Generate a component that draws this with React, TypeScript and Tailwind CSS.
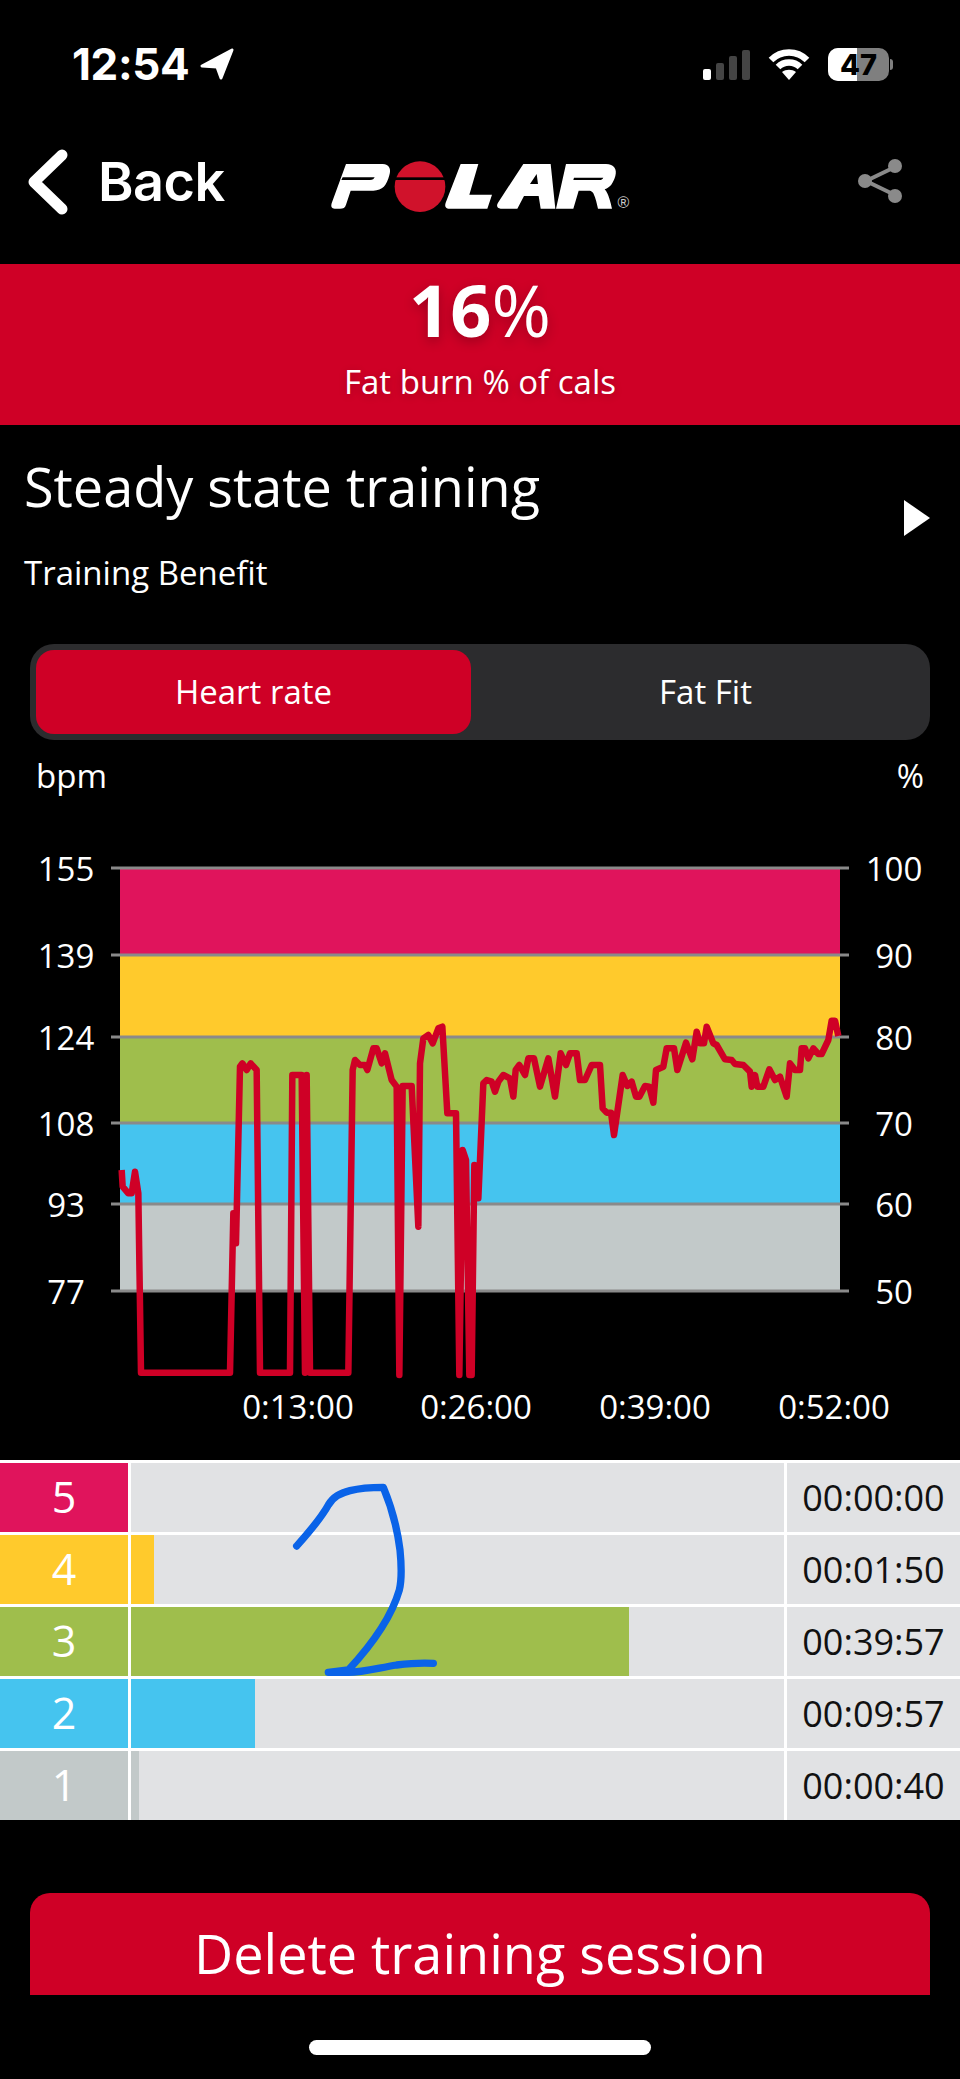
import React from 'react';

const OPEN_SANS = "font-['Open_Sans',sans-serif]";

const bands = [
  { y: 868, h: 87, color: '#e0145c' },
  { y: 955, h: 82, color: '#ffca2c' },
  { y: 1037, h: 86, color: '#9fbe4c' },
  { y: 1123, h: 81, color: '#45c4ef' },
  { y: 1204, h: 87, color: '#c2c9c9' },
];

const ticks = [
  { y: 868, bpm: '155', pct: '100' },
  { y: 955, bpm: '139', pct: '90' },
  { y: 1037, bpm: '124', pct: '80' },
  { y: 1123, bpm: '108', pct: '70' },
  { y: 1204, bpm: '93', pct: '60' },
  { y: 1291, bpm: '77', pct: '50' },
];

const times = [
  { x: 298, label: '0:13:00' },
  { x: 476, label: '0:26:00' },
  { x: 655, label: '0:39:00' },
  { x: 834, label: '0:52:00' },
];

const zones = [
  { n: 5, color: '#e0145c', bar: 0, time: '00:00:00' },
  { n: 4, color: '#ffca2c', bar: 23, time: '00:01:50' },
  { n: 3, color: '#9fbe4c', bar: 498, time: '00:39:57' },
  { n: 2, color: '#45c4ef', bar: 124, time: '00:09:57' },
  { n: 1, color: '#c2c9c9', bar: 8, time: '00:00:40' },
];

// heart rate trace, first part
const traceA = [
  [185, 570], [188, 620], [205, 640], [215, 640], [225, 575], [235, 640], [243, 1178], [510, 1178], [520, 700], [528, 790],
  [540, 260], [547, 250], [560, 270], [572, 250], [590, 270], [600, 1178], [690, 1178], [697, 285], [725, 285], [735, 1178],
  [740, 285], [750, 1178], [865, 1178], [878, 270], [885, 240], [900, 255], [915, 255], [922, 270], [940, 205], [950, 205],
  [965, 250], [975, 220], [995, 300], [1010, 320], [1018, 1185], [1028, 318], [1055, 318], [1075, 740], [1080, 250], [1090, 175],
  [1105, 165], [1118, 190], [1135, 145], [1147, 140], [1162, 400], [1188, 400], [1198, 1185], [1208, 510], [1218, 540], [1228, 1185],
  [1235, 1185], [1243, 555], [1255, 655], [1270, 310], [1280, 300], [1295, 305], [1305, 335], [1315, 305], [1330, 285], [1350, 295],
].map(([x, y]) => `${60 + x / 3},${980 + y / 3}`);

// second part
const traceB = [
  [190, 350], [197, 270], [208, 255], [225, 285], [235, 235], [252, 235], [270, 320], [295, 235], [315, 350], [332, 220],
  [348, 255], [360, 220], [380, 220], [390, 300], [405, 300], [425, 255], [450, 255], [458, 385], [470, 398], [483, 398],
  [492, 465], [518, 285], [532, 318], [545, 305], [558, 350], [568, 350], [585, 318], [598, 320], [610, 368], [618, 270],
  [640, 260], [650, 205], [672, 205], [682, 270], [708, 188], [727, 238], [740, 155], [750, 190], [762, 190], [770, 140],
  [790, 190], [800, 195], [825, 238], [845, 240], [855, 252], [880, 255], [900, 275], [905, 320], [915, 285], [922, 320],
  [940, 320], [958, 268], [975, 300], [990, 290], [1010, 350], [1020, 250], [1035, 270], [1050, 270], [1055, 205], [1065, 205],
  [1075, 235], [1090, 205], [1105, 222], [1115, 222], [1135, 180], [1145, 122], [1155, 122], [1165, 168],
].map(([x, y]) => `${450 + x / 3},${980 + y / 3}`);

const StatusBar = () => (
  <div className="flex h-[100px] items-start justify-between pl-[72px] pr-[67px] pt-[43px]">
    <div className="flex items-center gap-[10px]">
      <span className="font-['Inter',sans-serif] text-[44px] leading-[42px] font-bold tracking-[-0.4px] text-white">12:54</span>
      <svg width="36" height="34" viewBox="0 0 36 34">
        <path d="M33 3 L3 19 L18 20 L22 31 Z" fill="#fff" stroke="#fff" strokeWidth="3" strokeLinejoin="round" />
      </svg>
    </div>
    <div className="mt-[5px] flex items-center">
      <div className="flex h-[31px] items-end gap-[5px]">
        <div className="h-[11px] w-[8px] rounded-[2px] bg-white" />
        <div className="h-[17px] w-[8px] rounded-[2px] bg-[#444]" />
        <div className="h-[24px] w-[8px] rounded-[2px] bg-[#444]" />
        <div className="h-[30px] w-[8px] rounded-[2px] bg-[#444]" />
      </div>
      <svg className="ml-[18px]" width="42" height="32" viewBox="0 0 42 32" fill="none" stroke="#fff" strokeWidth="6.5">
        <path d="M3 11 C13 1 29 1 39 11" />
        <path d="M10 18 C16 12 26 12 32 18" />
        <path d="M21 31 L14 23 C18 20 24 20 28 23 Z" fill="#fff" stroke="none" />
      </svg>
      <div className="relative ml-[18px] flex h-[33px] w-[61px] items-center justify-center overflow-hidden rounded-[10px] bg-[#7f7f7f]">
        <div className="absolute inset-y-0 left-0 w-[29px] bg-white" />
        <span className="relative font-['Inter',sans-serif] text-[29px] leading-none font-extrabold text-black">47</span>
      </div>
      <div className="ml-[1px] h-[11px] w-[3px] rounded-r-full bg-[#7f7f7f]" />
    </div>
  </div>
);

const PolarLogo = () => (
  <svg width="340" height="90" viewBox="0 0 1020 270" className="absolute left-[310px] top-[40px]">
    <path
      fillRule="evenodd"
      fill="#fff"
      d="M108 72 H218 C238 72 244 88 238 106 C230 136 218 152 190 152 H122 L108 194 C105 203 100 206 90 206 H74 C65 206 62 200 65 190 Z M98 112 L94 120 H180 C188 120 192 117 194 112 Z"
    />
    <circle cx="330" cy="140" r="76" fill="#d0122b" />
    <rect x="250" y="112" width="160" height="8" fill="#000" />
    <path fill="#fff" d="M452 72 H505 L478 164 H546 L532 206 H420 C408 206 403 200 407 188 Z" />
    <path
      fillRule="evenodd"
      fill="#fff"
      d="M640 72 H722 L736 206 H692 L686 168 H642 L622 206 H572 C562 206 558 198 564 188 Z M660 132 H684 L680 102 Z"
    />
    <path
      fillRule="evenodd"
      fill="#fff"
      d="M768 72 H888 C912 72 922 88 916 108 C910 128 902 142 884 148 C896 160 902 190 906 206 H864 C860 190 858 176 850 160 C846 152 840 152 830 152 H806 L790 206 H738 Z M792 113 L790 120 H868 C874 120 878 117 880 113 Z"
    />
    <text x="940" y="204" textAnchor="middle" fontSize="48" fill="#ccc" fontFamily="'Liberation Sans', sans-serif">®</text>
  </svg>
);

const Header = () => (
  <div className="relative flex h-[164px] items-center justify-between pl-[28px] pr-[56px]">
    <div className="flex items-center gap-[30px]">
      <svg width="40" height="66" viewBox="0 0 40 66" fill="none" stroke="#fff" strokeWidth="11" strokeLinecap="round" strokeLinejoin="round">
        <path d="M34 6 L6 33 L34 60" />
      </svg>
      <span className="font-['Inter',sans-serif] text-[54px] leading-none font-semibold tracking-[-0.5px] text-white">Back</span>
    </div>
    <PolarLogo />
    <svg width="47" height="46" viewBox="0 0 47 46" className="mb-[3px]" stroke="#8a8a8a" strokeWidth="4" fill="#8a8a8a">
      <path d="M38 9 L9 23 L38 37" fill="none" />
      <circle cx="38" cy="8" r="7" stroke="none" />
      <circle cx="8" cy="23" r="7" stroke="none" />
      <circle cx="38" cy="38" r="7" stroke="none" />
    </svg>
  </div>
);

const Chart = () => (
  <svg width="960" height="600" viewBox="0 840 960 600" className="block" fontFamily="'Open Sans', sans-serif">
    {bands.map((b) => (
      <rect key={b.y} x="120" y={b.y} width="720" height={b.h} fill={b.color} />
    ))}
    {ticks.map((t) => (
      <g key={t.y}>
        <rect x="111" y={t.y - 1.5} width="738" height="3" fill="#8a8a8a" />
        <text x="66" y={t.y} textAnchor="middle" dominantBaseline="central" fontSize="33" fill="#fff">{t.bpm}</text>
        <text x="894" y={t.y} textAnchor="middle" dominantBaseline="central" fontSize="33" fill="#fff">{t.pct}</text>
      </g>
    ))}
    <polyline points={[...traceA, ...traceB].join(' ')} fill="none" stroke="#cf0026" strokeWidth="6.5" strokeLinejoin="round" />
    {times.map((t) => (
      <text key={t.x} x={t.x} y="1406" textAnchor="middle" dominantBaseline="central" fontSize="33" fill="#fff">{t.label}</text>
    ))}
  </svg>
);

const ZoneTable = () => (
  <div className="relative flex flex-col gap-[3px] bg-white pt-[3px]">
    {zones.map((z) => (
      <div key={z.n} className="flex h-[69px] gap-[3px]">
        <div style={{ backgroundColor: z.color }} className="flex w-[128px] items-center justify-center text-[43px] text-white">{z.n}</div>
        <div className="flex-1 bg-[#e1e2e4]">
          <div style={{ width: z.bar, backgroundColor: z.color }} className="h-full" />
        </div>
        <div className="flex w-[173px] items-center justify-center bg-[#e1e2e4] text-[36px] text-[#111]">{z.time}</div>
      </div>
    ))}
    {/* pen scribble on top of the screenshot */}
    <svg width="500" height="400" viewBox="0 0 1500 1200" className="absolute left-0 top-[-20px]" fill="none" stroke="#0a63e8" strokeWidth="22" strokeLinecap="round" strokeLinejoin="round">
      <path d="M890 318 C915 290 960 240 985 195 C1000 170 1020 160 1050 152 C1085 143 1120 142 1150 142 C1170 190 1190 250 1200 330 C1205 380 1205 420 1198 450 C1175 530 1110 620 1045 690 L985 697 H1045 C1090 697 1130 685 1190 675 C1230 670 1270 668 1300 670" />
    </svg>
  </div>
);

export default function App() {
  return (
    <div className={`flex h-[2079px] w-[960px] flex-col bg-black ${OPEN_SANS}`}>
      <StatusBar />
      <Header />
      <div className="flex h-[161px] flex-col items-center bg-[#cf0026] text-white">
        <div className="mt-[4px] text-[72px] leading-[82px] [text-shadow:0_4px_12px_rgba(0,0,0,0.25)]">
          <span className="font-bold">16</span>%
        </div>
        <div className="mt-[10px] text-[33px] leading-[44px] [text-shadow:0_2px_8px_rgba(0,0,0,0.2)]">Fat burn % of cals</div>
      </div>
      <div className="flex h-[219px] items-start justify-between pl-[24px] pr-[30px] text-white">
        <div>
          <div className="mt-[26px] text-[54px] leading-[70px]">Steady state training</div>
          <div className="mt-[30px] text-[33px] leading-[44px]">Training Benefit</div>
        </div>
        <svg width="26" height="36" viewBox="0 0 26 36" className="mt-[75px]">
          <path d="M0 0 L26 18 L0 36 Z" fill="#fff" />
        </svg>
      </div>
      <div className="mx-[30px] flex h-[96px] rounded-[24px] bg-[#2c2c2e] p-[6px] text-[33px] text-white">
        <div className="flex w-[435px] items-center justify-center rounded-[18px] bg-[#cf0026]">Heart rate</div>
        <div className="flex flex-1 items-center justify-center pl-[16px]">Fat Fit</div>
      </div>
      <div className="flex h-[100px] items-start justify-between pl-[36px] pr-[36px] pt-[14px] text-[33px] leading-[44px] text-white">
        <span>bpm</span>
        <span>%</span>
      </div>
      <Chart />
      <div className="h-[20px]" />
      <ZoneTable />
      <div className="flex h-[73px]" />
      <div className="mx-[30px] flex h-[102px] items-end justify-center rounded-t-[20px] bg-[#cf0026] text-[54px] leading-[83px] text-white">
        Delete training session
      </div>
      <div className="mt-[45px] flex justify-center">
        <div className="h-[15px] w-[342px] rounded-full bg-white" />
      </div>
    </div>
  );
}
